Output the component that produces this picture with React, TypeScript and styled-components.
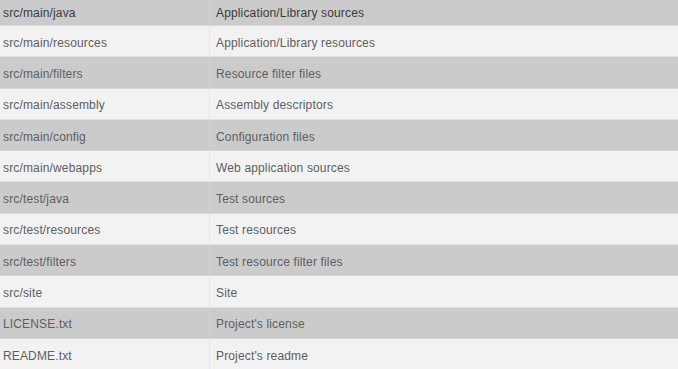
import React from "react";
import styled, { createGlobalStyle } from "styled-components";

const Global = createGlobalStyle`
  html, body { margin: 0; padding: 0; background: #f2f2f2; }
  body { font-family: "Liberation Sans", Arial, sans-serif; }
`;

const Table = styled.div`
  display: grid;
  grid-template-columns: 210px 1fr;
  width: 678px;
  overflow: hidden;
`;

const Cell = styled.div<{ $shade: boolean; $head?: boolean; $first?: boolean }>`
  height: ${(p) => (p.$head ? "26px" : "31.3px")};
  box-sizing: border-box;
  display: flex;
  align-items: center;
  padding-left: ${(p) => (p.$first ? "3px" : "6px")};
  padding-top: ${(p) => (p.$head ? "0" : "3px")};
  background: ${(p) => (p.$shade ? "#cbcbcb" : "#f2f2f2")};
  border-bottom: 1px solid ${(p) => (p.$shade ? "#d6d6d6" : "#e0e0e0")};
  border-right: ${(p) => (p.$first ? `1.5px solid ${p.$shade ? "#d3d3d3" : "#e6e6e6"}` : "none")};
  font-size: 12px;
  letter-spacing: 0.15px;
  color: ${(p) => (p.$head ? "#3a3a3a" : "#5e5e5e")};
  white-space: nowrap;
`;

const rows: [string, string][] = [
  ["src/main/java", "Application/Library sources"],
  ["src/main/resources", "Application/Library resources"],
  ["src/main/filters", "Resource filter files"],
  ["src/main/assembly", "Assembly descriptors"],
  ["src/main/config", "Configuration files"],
  ["src/main/webapps", "Web application sources"],
  ["src/test/java", "Test sources"],
  ["src/test/resources", "Test resources"],
  ["src/test/filters", "Test resource filter files"],
  ["src/site", "Site"],
  ["LICENSE.txt", "Project's license"],
  ["README.txt", "Project's readme"],
];

export default function App() {
  return (
    <>
      <Global />
      <Table>
        {rows.map(([a, b], i) => {
          const shade = i % 2 === 0;
          const head = i === 0;
          return (
            <React.Fragment key={a}>
              <Cell $shade={shade} $head={head} $first>
                {a}
              </Cell>
              <Cell $shade={shade} $head={head}>
                {b}
              </Cell>
            </React.Fragment>
          );
        })}
      </Table>
    </>
  );
}
